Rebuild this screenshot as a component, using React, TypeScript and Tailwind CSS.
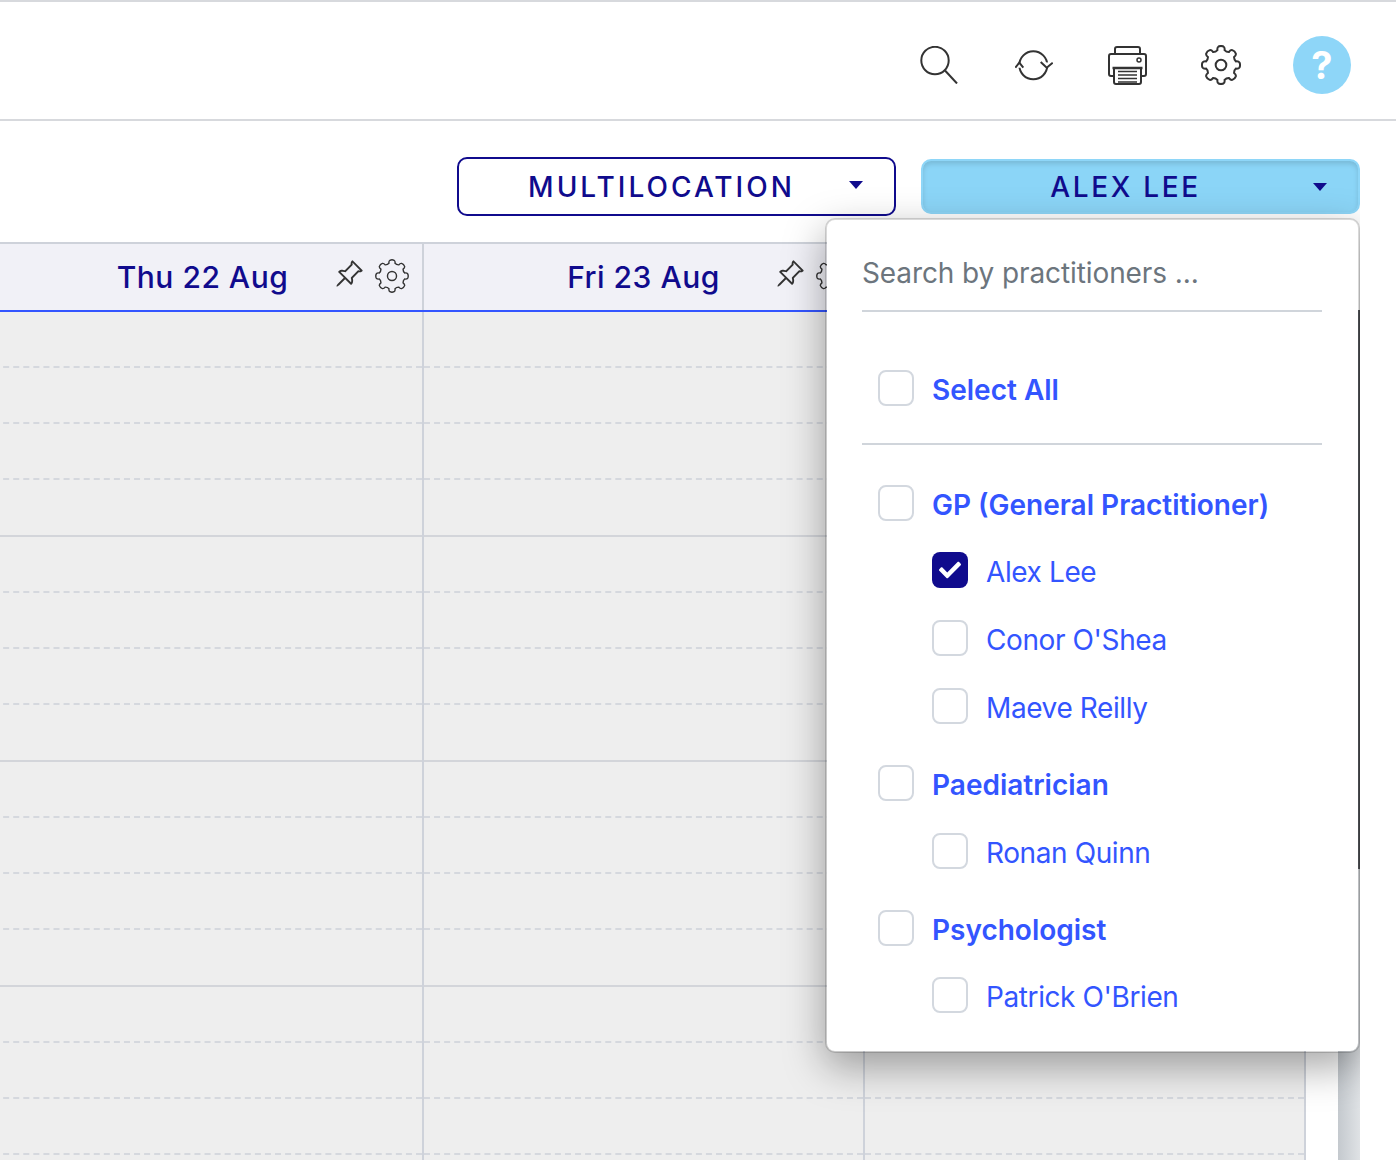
import { BsPinAngle } from 'react-icons/bs';
import { FaCheck } from 'react-icons/fa';

const FONT = "font-['Inter','Liberation_Sans',sans-serif]";

// scalloped cog outline, same shape for the toolbar and the column headers
const gearPath = (() => {
  const teeth = 8;
  const pts: string[] = [];
  for (let i = 0; i < teeth; i++) {
    const a = (i / teeth) * Math.PI * 2 - Math.PI / 2;
    const step = (Math.PI * 2) / teeth;
    const p = (r: number, t: number) => `${(12 + r * Math.cos(t)).toFixed(2)} ${(12 + r * Math.sin(t)).toFixed(2)}`;
    const start = p(9.2, a - step * 0.3);
    const tipA = p(11.2, a - step * 0.17);
    const tipB = p(11.2, a + step * 0.17);
    const end = p(9.2, a + step * 0.3);
    const next = p(9.2, a + step * 0.7);
    pts.push(`${i === 0 ? 'M' + start : ''} Q${p(10.8, a - step * 0.28)} ${tipA} Q${p(11.8, a)} ${tipB} Q${p(10.8, a + step * 0.28)} ${end} Q${p(8.4, a + step * 0.5)} ${next}`);
  }
  return pts.join(' ') + ' Z';
})();

const Gear = ({ className, width = 1 }: { className: string; width?: number }) => (
  <svg viewBox="0 0 24 24" fill="none" stroke="#333333" strokeWidth={width} className={className}>
    <path d={gearPath} />
    <circle cx="12" cy="12" r="3.2" />
  </svg>
);

const SearchIcon = () => (
  <svg viewBox="0 0 38 38" fill="none" stroke="#333333" strokeWidth="2" className="w-[38px] h-[38px]">
    <circle cx="15" cy="14.5" r="13.7" />
    <path d="M25 24.5 L37 37.5" />
  </svg>
);

const RefreshIcon = () => (
  <svg viewBox="0 0 38 32" fill="none" stroke="#333333" strokeWidth="2" className="w-[38px] h-8">
    <circle cx="18.3" cy="16.3" r="14" />
    <path d="M0.3 18.7 L4.3 13.7 L8.3 18.7" fill="#fff" stroke="none" />
    <path d="M25.7 13 L31.7 18.7 L37.7 13.7" fill="#fff" stroke="none" />
    <path d="M0.3 18.7 L4.3 13.7 L8.3 18.7" />
    <path d="M25.7 13 L31.7 18.7 L37.7 13.7" />
  </svg>
);

const PrinterIcon = () => (
  <svg viewBox="0 0 39 39" fill="none" stroke="#333333" strokeWidth="2" className="w-[39px] h-[39px]">
    <path d="M7 8 V3 Q7 1 9 1 H30 Q32 1 32 3 V8" />
    <path d="M6 30 H3 Q1 30 1 28 V10 Q1 8 3 8 H36 Q38 8 38 10 V28 Q38 30 36 30 H33" />
    <path d="M6 22 V36 Q6 38 8 38 H31 Q33 38 33 36 V22" fill="#fff" />
    <path d="M4.5 22 H34.5" strokeWidth="2.5" />
    <path d="M10 25.5 H29 M10 29 H29 M10 32.5 H29 M10 36 H29" strokeWidth="1.6" />
    <circle cx="31" cy="14" r="2" strokeWidth="1.5" />
  </svg>
);

const Caret = () => (
  <span className="absolute right-[31px] top-[22px] w-0 h-0 border-x-[7px] border-x-transparent border-t-[8px] border-t-[#100b8d]" />
);

const Box = ({ checked = false }: { checked?: boolean }) =>
  checked ? (
    <span className="w-9 h-9 shrink-0 rounded-lg bg-[#100b8d] flex items-center justify-center">
      <FaCheck className="w-[22px] h-[22px] text-white" />
    </span>
  ) : (
    <span className="w-9 h-9 shrink-0 rounded-lg border-2 border-[#d3d8df] bg-white" />
  );

const DayHeader = ({ label }: { label: string }) => (
  <div className="relative w-[441px] shrink-0 h-full flex items-center justify-center border-r-2 border-[#ced2da]">
    <span className="text-[30px] font-medium text-[#100b8d] tracking-[0.5px]">{label}</span>
    <BsPinAngle className="absolute right-[58px] top-[15px] w-[30px] h-[30px] text-[#333333]" />
    <Gear className="absolute right-[13px] top-[15px] w-[34px] h-[34px]" />
  </div>
);

const slots = Array.from({ length: 16 });

const DayColumn = () => (
  <div className="w-[441px] shrink-0 border-r-2 border-[#ced2da]">
    {slots.map((_, i) =>
      (i + 1) % 4 === 0 ? (
        <div key={i} className="h-[57px] border-b-2 border-solid border-[#d3d5da]" />
      ) : (
        <div key={i} className="h-14 border-b-2 border-dashed border-[#d5d8de]" />
      ),
    )}
  </div>
);

const Row = ({ label, group = false, checked = false, className = '' }: { label: string; group?: boolean; checked?: boolean; className?: string }) => (
  <div className={`flex items-center h-9 gap-[18px] ${group ? 'pl-4' : 'pl-[70px]'} ${className}`}>
    <Box checked={checked} />
    <span className={`text-[#3355ff] text-[28px] whitespace-nowrap pt-1 ${group ? 'font-semibold' : 'font-normal tracking-[-0.4px]'}`}>{label}</span>
  </div>
);

const App = () => {
  return (
    <div className={`w-[1396px] h-[1160px] overflow-hidden bg-white ${FONT}`}>
      {/* Top bar */}
      <header className="h-[121px] border-t-2 border-b-2 border-[#d7d9dd] flex items-center justify-end pr-[45px] pt-[9px]">
        <div className="flex items-center">
          <SearchIcon />
          <div className="ml-[57px]"><RefreshIcon /></div>
          <div className="ml-[55px]"><PrinterIcon /></div>
          <div className="ml-[54px]"><Gear className="w-[40px] h-[40px]" width={1.2} /></div>
          <div className="ml-[52px] w-[58px] h-[58px] rounded-full bg-[#8ed6f8] flex items-center justify-center text-white text-[38px] font-bold">?</div>
        </div>
      </header>

      {/* the page body stops at the scrollbar, the dropdown shadow is cut there too */}
      <div className="relative w-[1360px] h-[1039px] overflow-hidden">
        {/* Filter buttons */}
        <div className="flex justify-end gap-[25px] pt-9">
          <button className="relative w-[439px] h-[59px] rounded-[10px] border-2 border-[#100b8d] bg-white text-[#100b8d] text-[28px] font-medium tracking-[3px] pr-[30px]">
            MULTILOCATION
            <Caret />
          </button>
          <button className="relative w-[439px] h-[55px] mt-[2px] rounded-[10px] border-2 border-[#8ed6f8] bg-[#8bd5f7] shadow-[inset_0_3px_5px_rgba(0,0,0,0.125)] text-[#100b8d] text-[28px] font-medium tracking-[2.65px] pr-[30px]">
            ALEX LEE
            <Caret />
          </button>
        </div>

        {/* Calendar */}
        <div className="mt-[26px] w-[1306px]">
          <div className="h-[70px] -ml-[17px] flex bg-[#f1f1f7] border-t-2 border-b-2 border-t-[#ced2da] border-b-[#3355ff] w-[1323px]">
            <DayHeader label="Thu 22 Aug" />
            <DayHeader label="Fri 23 Aug" />
          </div>
          <div className="-ml-[17px] flex bg-[#eeeeee] w-[1323px]">
            <DayColumn />
            <DayColumn />
            <DayColumn />
          </div>
        </div>

        {/* Scrollbar, it shows through the dropdown's see-through border */}
        <div className="absolute left-[1338px] top-[189px] bottom-0 w-[22px] bg-gradient-to-r from-[#c4c9ce] to-[#dfe2e5]" />
        <div className="absolute left-[1338px] top-[189px] h-[559px] w-[22px] bg-[#55585c]" />

        {/* Practitioner dropdown */}
        <div className="absolute left-[825px] top-[97px] w-[535px] h-[835px] bg-white bg-clip-padding rounded-[10px] border-2 border-black/15 shadow-[0_14px_40px_rgba(0,0,0,0.35)] pl-[35px] pr-9">
          <div className="h-[92px] border-b-2 border-[#d0d5db] flex items-center pt-[15px]">
            <span className="text-[28px] text-[#6c757d] whitespace-nowrap tracking-[-0.1px]">Search by practitioners ...</span>
          </div>
          <div className="pt-[58px] pb-[37px] border-b-2 border-[#d0d5db]">
            <Row label="Select All" group />
          </div>
          <Row label="GP (General Practitioner)" group className="mt-10" />
          <Row label="Alex Lee" checked className="mt-[31px]" />
          <Row label="Conor O'Shea" className="mt-8" />
          <Row label="Maeve Reilly" className="mt-8" />
          <Row label="Paediatrician" group className="mt-[41px]" />
          <Row label="Ronan Quinn" className="mt-8" />
          <Row label="Psychologist" group className="mt-[41px]" />
          <Row label="Patrick O'Brien" className="mt-[31px]" />
        </div>
      </div>
    </div>
  );
};

export default App;
